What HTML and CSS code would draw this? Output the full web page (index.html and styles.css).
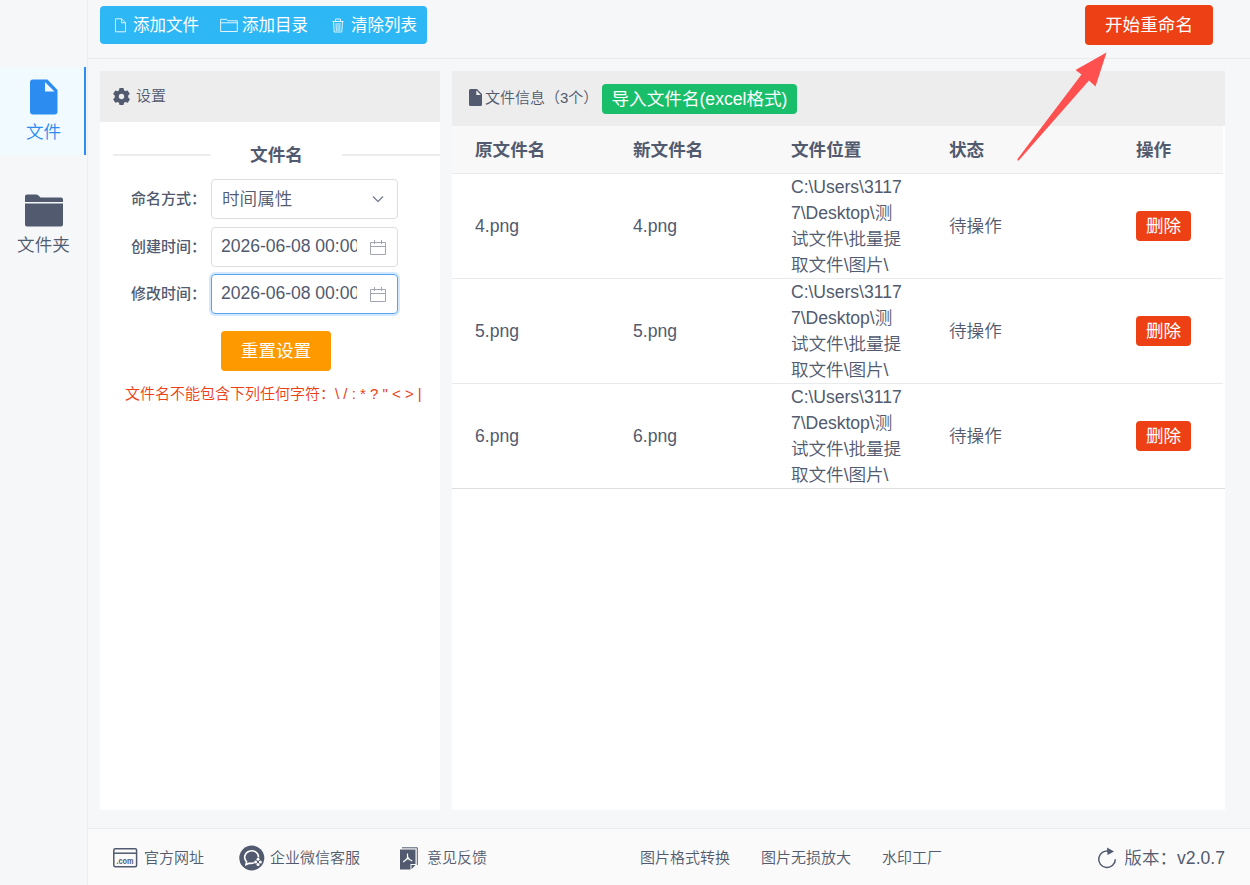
FILE: index.html
```html
<!DOCTYPE html>
<html lang="zh-CN">
<head>
<meta charset="utf-8">
<title>文件重命名</title>
<link rel="stylesheet" href="styles.css">
</head>
<body>
<div class="app">
  <nav class="side">
    <a class="side-item active">
      <svg width="28" height="36" viewBox="0 0 28 36"><path fill="currentColor" fill-rule="evenodd" d="M3 .5h14.5L27.500 11v21.500a3 3 0 0 1-3 3H3a3 3 0 0 1-3-3v-29a3 3 0 0 1 3-3ZM15 3v9.500h9.500Z"/></svg>
      <span>文件</span>
    </a>
    <a class="side-item folder">
      <svg width="38" height="33" viewBox="0 0 38 33"><path fill="currentColor" d="M0 8V2.500Q0 .5 2 .5h9q1.500 0 2.500 1l2 2h20.500q2 0 2 2V8ZM0 9.500h38V30.500q0 2-2 2H2q-2 0-2-2Z"/></svg>
      <span>文件夹</span>
    </a>
  </nav>
  <div class="content">
    <header class="topbar">
      <div class="tools">
        <a class="tool"><svg width="12" height="15" viewBox="0 0 12 15"><path class="line" d="M.5 .8h6l4 4v9H.5ZM6.500 .8v4h4"/></svg>添加文件</a>
        <a class="tool"><svg width="18" height="15" viewBox="0 0 18 15"><path class="line" d="M.6 13.500V1.300h6l1 1.500h9.700v10.700ZM.6 4.800h16.700"/></svg>添加目录</a>
        <a class="tool"><svg width="12" height="15" viewBox="0 0 12 15"><path class="line" d="M.5 3.500h11M3.500 3V1h5v2M1.500 3.500l.7 10.500h7.600l.7-10.500M4 5l.3 8M6 5v8M8 5l-.3 8"/></svg>清除列表</a>
      </div>
      <button class="start">开始重命名</button>
    </header>
    <main class="panels">
      <section class="settings">
        <div class="settings-head">
          <svg width="17" height="17" viewBox="0 0 17 17"><path fill="currentColor" fill-rule="evenodd" d="M6.500 0h4l.5 2.300 1.300.8L14.600 2.400l2.200 3.400L15.200 7.500v2l1.700 1.700-2.100 3.500-2.400-.8-1.400.8-.5 2.300h-4L6 14.700l-1.400-.8-2.300.8L.1 11.300l1.700-1.700V7.500L.1 5.900l2.200-3.500 2.300.8L6 2.300ZM8.500 5.800a2.700 2.700 0 1 0 0 5.400 2.700 2.700 0 0 0 0-5.400Z"/></svg>
          <span>设置</span>
        </div>
        <div class="divider"><h3>文件名</h3></div>
        <div class="form">
          <div class="row"><label>命名方式：</label>
            <div class="field"><span>时间属性</span><svg class="chev" width="14" height="9" viewBox="0 0 14 9"><path class="line" d="m2 1.500 5 5 5-5"/></svg></div>
          </div>
          <div class="row"><label>创建时间：</label>
            <div class="field date"><span>2026-06-08 00:00:00</span><svg class="cal" width="17" height="16" viewBox="0 0 17 16"><path class="line" d="M.5 2.500h15v12H.5ZM.5 6.500H15.500M4.500 0v4M11.500 0v4"/></svg></div>
          </div>
          <div class="row last"><label>修改时间：</label>
            <div class="field date focus"><span>2026-06-08 00:00:00</span><svg class="cal" width="17" height="16" viewBox="0 0 17 16"><path class="line" d="M.5 2.500h15v12H.5ZM.5 6.500H15.500M4.500 0v4M11.500 0v4"/></svg></div>
          </div>
        </div>
        <button class="reset">重置设置</button>
        <p class="warn">文件名不能包含下列任何字符：\ / : * ? " &lt; &gt; |</p>
      </section>
      <section class="files">
        <div class="files-head">
          <svg width="13" height="17" viewBox="0 0 13 17"><path fill="currentColor" fill-rule="evenodd" d="M1.500 0H8l5 5v10.500a1.500 1.500 0 0 1-1.500 1.500h-10A1.500 1.500 0 0 1 0 15.500v-14A1.500 1.500 0 0 1 1.500 0ZM7.300 1.200v4.700h4.600Z"/></svg>
          <span class="info">文件信息（3个）</span>
          <button class="import">导入文件名(excel格式)</button>
        </div>
        <div class="grid thead"><b>原文件名</b><b>新文件名</b><b>文件位置</b><b>状态</b><b>操作</b></div>
        <div class="grid trow"><span>4.png</span><span>4.png</span><span class="path">C:\Users\3117<br>7\Desktop\测<br>试文件\批量提<br>取文件\图片\</span><span>待操作</span><span><button class="del">删除</button></span></div>
        <div class="grid trow"><span>5.png</span><span>5.png</span><span class="path">C:\Users\3117<br>7\Desktop\测<br>试文件\批量提<br>取文件\图片\</span><span>待操作</span><span><button class="del">删除</button></span></div>
        <div class="grid trow last"><span>6.png</span><span>6.png</span><span class="path">C:\Users\3117<br>7\Desktop\测<br>试文件\批量提<br>取文件\图片\</span><span>待操作</span><span><button class="del">删除</button></span></div>
      </section>
    </main>
    <footer class="foot">
      <a class="site"><svg width="25" height="20" viewBox="0 0 25 20"><rect class="line" x=".8" y=".8" width="22.800" height="18" rx="1.500"/><path class="line" d="M1 5.200h23"/><text class="com" x="3.500" y="16" textLength="17" lengthAdjust="spacingAndGlyphs">.com</text></svg>官方网址</a>
      <a class="wechat"><svg width="26" height="26" viewBox="0 0 26 26"><circle cx="12.800" cy="13" r="12.500" fill="currentColor"/><path class="light" d="M15 17.800a7.500 7.500 0 0 1-4.700.4l-3.300 1.500.6-3a6.900 6.500 0 1 1 11.900-4.200"/><g fill="#fff"><circle cx="19" cy="14.300" r="1.500"/><circle cx="16.600" cy="16.900" r="1.500"/><circle cx="21.400" cy="16.900" r="1.500"/><circle cx="19" cy="19.500" r="1.500"/></g></svg>企业微信客服</a>
      <a class="feedback"><svg width="18" height="23" viewBox="0 0 18 23"><path fill="currentColor" d="M0 2.500h15.500v14.500h-5v5.500H0ZM11.500 18h4l-4 4.200Z"/><path class="line" d="M2 .8h15.300V18"/><path class="light thin" d="M7.500 6.500v5.500M7.500 11.500l-4.300 3.500M7.500 11.500l4.800 2.500M6 13l2-3.500M9.500 12.500l-2-3"/></svg>意见反馈</a>
      <a class="convert">图片格式转换</a>
      <a class="enlarge">图片无损放大</a>
      <a class="factory">水印工厂</a>
      <span class="version"><svg width="20" height="22" viewBox="0 0 20 22"><path class="line" d="M12 4.200a8.300 8.300 0 1 0 6.300 8"/><path fill="currentColor" d="M10 .5 17 4.500 10.500 8Z"/></svg>版本：v2.0.7</span>
    </footer>
  </div>
</div>
<svg class="arrow" width="90" height="109" viewBox="0 0 90 109"><path d="M89.500 .5 58.500 18l6 4.500L.5 107v1.500h1.200L72 28.500l6.500 6Z"/></svg>
</body>
</html>
```

FILE: styles.css
```css
* { box-sizing: border-box; }
body {
  margin: 0;
  width: 1250px;
  height: 885px;
  overflow: hidden;
  background: #f5f7f9;
  color: #515a6e;
  font: 350 17.6px/26px "Liberation Sans", "Noto Sans CJK SC", sans-serif;
}
svg { display: block; flex: none; }
button {
  border: 0;
  padding: 0;
  color: #fff;
  border-radius: 4px;
  font: inherit;
  font-weight: 400;
  white-space: nowrap;
}
.line { fill: none; stroke: currentColor; }
.app { display: flex; height: 885px; }

.side { width: 88px; border-right: 1px solid #ecedef; padding-top: 67px; }
.side-item {
  display: flex;
  flex-direction: column;
  align-items: center;
  width: 86px;
  height: 88px;
  padding-top: 12px;
  gap: 4px;
}
.side-item.active { background: #f0faff; color: #2d8cf0; border-right: 2px solid #2d8cf0; padding-left: 3px; }
.side-item.folder { margin-top: 25px; padding: 14px 0 0 1px; gap: 5px; }

.content { flex: 1; display: flex; flex-direction: column; }
.topbar {
  display: flex;
  justify-content: space-between;
  align-items: flex-start;
  height: 59px;
  padding: 5px 37px 0 12px;
  border-bottom: 1px solid #e8eaec;
}
.tools {
  display: flex;
  align-items: center;
  width: 327px;
  height: 38px;
  margin-top: 1px;
  padding-left: 15px;
  border-radius: 4px;
  background: #2db7f5;
  color: #fff;
  font-size: 16.5px;
  font-weight: 400;
}
.tool { display: flex; align-items: center; gap: 6px; }
.tool + .tool { margin-left: 21px; }
.tool:nth-child(2) { gap: 4px; }
.tool:nth-child(3) { margin-left: 24px; gap: 7px; }
.tool svg { opacity: .85; }
.start { width: 128px; height: 40px; background: #ed4014; }

.panels { display: flex; gap: 12px; height: 769px; padding: 12px 25px 18px 12px; }
.settings { width: 340px; background: #fff; }
.settings-head {
  display: flex;
  align-items: center;
  gap: 6px;
  height: 51px;
  padding-left: 13px;
  background: #ededed;
  font-size: 15px;
}
.settings-head span { padding-bottom: 2px; }
.divider { display: flex; align-items: center; height: 26px; margin: 20px 0 11px 13px; }
.divider::before, .divider::after { content: ""; height: 2px; width: 98px; background: #ebedef; }
.divider h3 { margin: 0; flex: 1; text-align: center; font-size: 17.6px; font-weight: 700; }
.form { display: grid; gap: 8px; }
.row { display: flex; align-items: center; height: 40px; }
.row.last { margin-top: -1px; }
.row label { width: 111px; padding-left: 31px; font-size: 15px; font-weight: 500; white-space: nowrap; }
.field {
  display: flex;
  align-items: center;
  justify-content: space-between;
  width: 187px;
  height: 40px;
  padding: 0 12px 0 10px;
  border: 1px solid #dcdee2;
  border-radius: 4px;
}
.field.date { padding: 0 10px 0 9px; }
.date span { width: 136px; padding-bottom: 2px; overflow: hidden; white-space: nowrap; letter-spacing: -.05px; }
.date svg { margin-top: 1px; }
.focus { border-color: #57a3f3; box-shadow: 0 0 0 2px rgba(45, 140, 240, .2); }
.chev { stroke-width: 1.5; color: #808695; }
.cal { color: #a0a5b1; }
.reset { display: block; width: 110px; height: 40px; margin: 17px 0 10px 121px; background: #f90; }
.warn { margin: 0 0 0 25px; color: #ed4014; font-size: 15px; white-space: nowrap; }

.files { width: 773px; background: #fff; }
.files-head { display: flex; align-items: center; height: 55px; padding-left: 17px; background: #ededed; font-size: 15px; }
.files-head svg { margin-bottom: 3px; }
.info { width: 120px; padding: 0 0 2px 3px; white-space: nowrap; }
.import { width: 195px; height: 30px; background: #19be6b; font-size: 17.6px; }
.grid { display: grid; grid-template-columns: 158px 158px 158px 187px 1fr; align-items: center; width: 771px; padding-left: 23px; }
.thead { height: 48px; background: #f8f8f9; border-bottom: 1px solid #e8eaec; font-weight: 700; }
.thead b { font-weight: 700; }
.trow { height: 105px; border-bottom: 1px solid #e8eaec; }
.trow.last { width: 773px; border-color: #dcdee2; }
.path { white-space: nowrap; letter-spacing: -.04px; }
.del { display: block; width: 55px; height: 30px; background: #ed4014; }

.foot { display: flex; align-items: center; height: 57px; padding: 2px 25px 0 25px; border-top: 1px solid #e8eaec; background: #fafafa; font-size: 15px; }
.foot a { display: flex; align-items: center; gap: 6px; white-space: nowrap; }
.site svg { stroke-width: 1.5; }
.com { fill: currentColor; stroke: none; font: 700 9px "Liberation Sans", sans-serif; }
.light { fill: none; stroke: #fff; stroke-width: 1.6; }
.light.thin { stroke-width: 1.2; }
.foot .wechat { margin-left: 35px; gap: 5px; }
.foot .feedback { margin-left: 40px; gap: 9px; }
.foot .convert { margin-left: 153px; }
.foot .enlarge, .foot .factory { margin-left: 31px; }
.version { display: flex; align-items: center; gap: 7px; margin-left: auto; padding-bottom: 1px; font-size: 17.6px; }
.version svg { stroke-width: 1.5; margin-top: 1px; }

.arrow { position: absolute; left: 1017px; top: 52px; fill: #ff5050; }
```
